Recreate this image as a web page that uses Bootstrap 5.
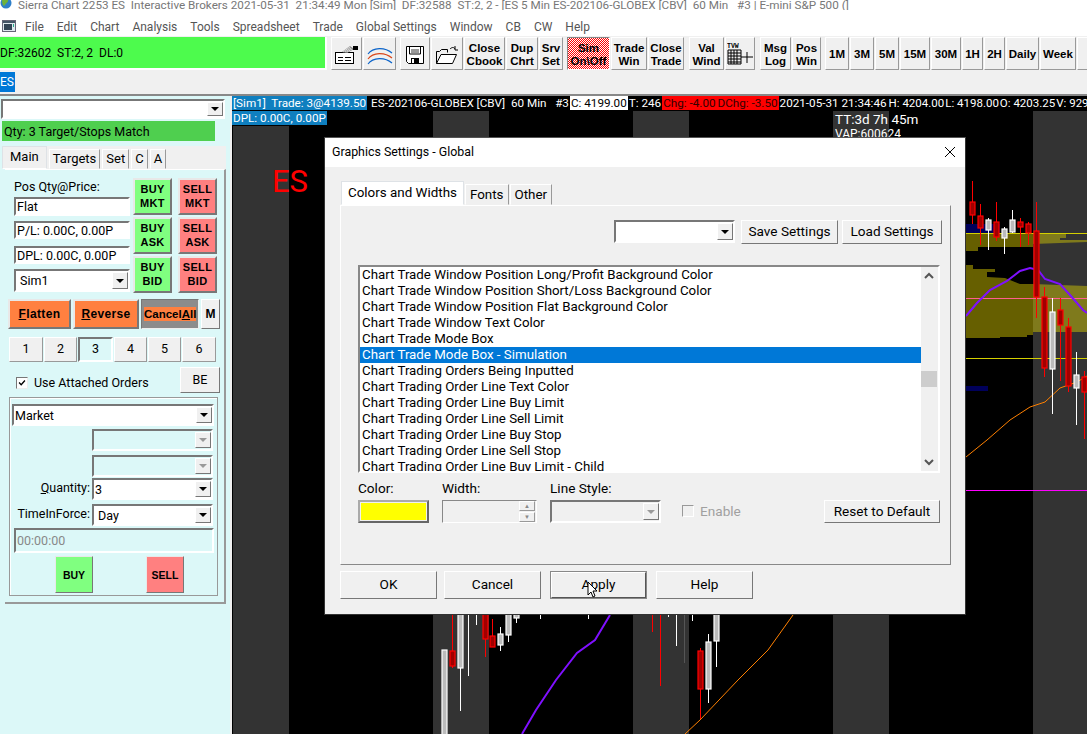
<!doctype html>
<html lang="en">
<head>
<meta charset="utf-8">
<title>Sierra Chart</title>
<link href="https://cdn.jsdelivr.net/npm/bootstrap@5.3.0/dist/css/bootstrap.min.css" rel="stylesheet">
<style>
html,body{margin:0;height:100%;overflow:hidden;background:#f0f0f0}
body{font:12px/1.2 Roboto,"Liberation Sans",Arial,sans-serif;color:#000}
.screen{position:relative;width:1087px;height:734px;overflow:hidden}
.titlebar{height:10px;background:#fff;color:#777;line-height:10px;white-space:nowrap;padding-left:18px;position:relative;font-size:11.7px}
.globe{position:absolute;left:0;top:-3px}
.menubar{height:26px;background:#fff;color:#555;padding:10px 0 0 25px;gap:13px;position:relative;line-height:14px;font-size:12px}
.mnuicon{position:absolute;left:2px;top:10px}
.toolbar{height:36px;padding-top:1px;background:#f0f0f0;gap:1px;white-space:nowrap}
.greenbox{width:327px;height:33px;background:#4dfb4d;border-bottom:2px solid #fff;border-right:2px solid #fff;line-height:33px;margin-right:3px;flex:none;font-size:12px}
.tb{height:33px;background:#f0f0f0;border:1px solid;border-color:#fff #999 #999 #fff;font:700 11.5px/13px "Liberation Sans",sans-serif;text-align:center;padding:2px 0 0;border-radius:0;color:#000;flex:none}
.tb:hover{background:#f0f0f0}
.tb svg{display:block;margin:auto}
.w31{width:31px}.w32{width:32px}.w33{width:33px}.w41{width:41px}.w30{width:30px}.w36{width:36px}.w21{width:21px}.w24{width:24px}.w34{width:34px}.w35{width:35px}.w29{width:29px}.w43{width:43px}
.lg3{margin-left:3px}.lg4{margin-left:4px}
.simbtn{background:repeating-conic-gradient(#f00 0 25%,#fff 0 50%) 0 0/2px 2px;border-color:#888 #fff #fff #888}
.simbtn:hover{background:repeating-conic-gradient(#f00 0 25%,#fff 0 50%) 0 0/2px 2px}
.tabstrip{height:24px;background:#f0f0f0;border-bottom:2px solid #888}
.estab{width:15px;height:20px;background:#0078d7;color:#fff;line-height:20px;font-size:12px}
.mainarea{height:638px}
.leftpane{width:230px;flex:none;background:#dcf8f8;padding:3px 0 0 1px;font-size:12.5px}
.sunken{background:#fff;border:2px solid;border-color:#777 #fff #fff #777;display:flex;align-items:center;overflow:hidden;white-space:nowrap;padding-left:1px}
.combo{justify-content:space-between;padding-right:0}
.cbtn{width:16px;height:calc(100% - 2px);background:#f0f0f0;border:1px solid;border-color:#fff #777 #777 #fff;display:flex;align-items:center;justify-content:center;flex:none;margin-bottom:0}
.cbtn::after{content:"";border:4px solid transparent;border-top:4px solid #000;border-bottom:0}
.dis .cbtn::after{border-top-color:#999}
.dis{background:#dcf8f8}
.topcombo{width:224px;height:20px}
.qtybar{width:213px;height:20px;margin:2px 0 0 1px;background:#4fcf4f;line-height:22px;padding-left:2px;white-space:nowrap;font-size:12.5px}
.ltabs{margin:5px 0 0 1px;width:224px;height:23px;background:#f0f0f0;border:0;padding-left:0;gap:2px;align-items:flex-end}
.ltabs .nav-link,.dtabs .nav-link{padding:0 3px;color:#000;background:#f0f0f0;border:1px solid;border-color:#fff #999 #f0f0f0 #fff;border-radius:0;height:20px;line-height:18px;margin:0;font-size:13px}
.ltabs .nav-link.active,.dtabs .nav-link.active{height:23px;line-height:19px}
.ltabs .nav-link.active{background:#f0f0f0;padding:0 7px}
.lbody{margin-left:4px;width:221px;height:435px;background:#dcf8f8;border:solid #999;border-width:0 2px 2px 0;padding-top:8px;border-top:1px solid #fff;outline:0}
.fields{width:116px;margin-left:9px;margin-right:3px}
.lbl{height:19px;line-height:18px;white-space:nowrap}
.f19{height:19px;line-height:15px}.f18{height:18px}
.mt6x{margin-top:5px}.mt7x{margin-top:7px}.mt5x{margin-top:5px}
.f23{height:23px}
.tcol{width:39px;gap:2px;margin-right:6px}
.tr{height:37px;border:2px solid;border-color:#e8e8e8 #777 #777 #e8e8e8;border-radius:0;padding:0 0 2px;font:700 11px/14px "Liberation Sans",sans-serif;color:#000;letter-spacing:.03em}
.tgreen,.tgreen:hover{background:#80ff80}
.tred,.tred:hover{background:#ff8080}
.actrow{margin:6px 0 0 3px;gap:2px;height:30px}
.orb,.orb:hover{background:#ff8040;border:2px solid;border-color:#e8e8e8 #777 #777 #e8e8e8;border-radius:0;font:700 12px "Liberation Sans",sans-serif;padding:0;color:#000;letter-spacing:.03em}
.o63{width:63px}.o66{width:66px}
.cancelb,.cancelb:hover{width:58px;background:#8c8c8c;border:1px solid;border-color:#777 #eee #eee #777;padding:0 2px;border-radius:0;display:flex;align-items:center}
.cancelb span{background:#ff8040;display:block;width:100%;font:700 11.5px/14px "Liberation Sans",sans-serif;white-space:nowrap;color:#000}
.mb1x,.mb1x:hover{width:19px;background:#f0f0f0;border:1px solid;border-color:#fff #777 #777 #fff;font:700 12px "Liberation Sans",sans-serif;padding:0;border-radius:0;color:#000}
.numrow{margin:8px 0 0 4px;gap:1px;height:25px}
.nb,.nb:hover{height:25px;background:#f0f0f0;border:1px solid;border-color:#fff #999 #999 #fff;padding:0;border-radius:0;font-size:12.5px;color:#000}
.nb.active,.nb.active:hover{background:#dcf8f8;border-color:#777 #fff #fff #777;border-width:2px}
.n33{width:33px}.n34{width:34px}.n35{width:35px}
.attrow{margin:5px 0 0 11px;height:26px;width:204px}
.ck{width:12px;height:12px;background:#fff;border:1px solid;border-color:#777 #eee #eee #777;flex:none;display:block}
.attlbl{margin-left:6px;white-space:nowrap;flex:1;padding-top:6px;line-height:20px}
.attwrap{padding-top:10px}
.beb,.beb:hover{width:40px;height:26px;background:#f0f0f0;border:1px solid;border-color:#fff #777 #777 #fff;padding:0;border-radius:0;font-size:12.5px;color:#000}
.grpbox{margin:4px 0 0 4px;width:209px;height:199px;border:1px solid #999;box-shadow:inset 1px 1px 0 #fff;padding:6px 3px 0 2px}
.c202{height:22px}
.crow{height:22px;margin-top:3px}
.crow.gap4{margin-top:4px}
.crow.tight{margin-top:1px}
.crow.tight2{margin-top:4px}
.clabel{width:80px;text-align:right;padding-right:2px;white-space:nowrap;flex:none;line-height:20px}
.ctrlw{width:121px;height:22px}
.timefld{height:25px;margin:2px 0 0 2px;width:200px;color:#888;background:#dcf8f8}
.buysell{margin:3px 0 0 0;padding:0 30px 0 43px;justify-content:space-between}
.bsb{width:38px;height:37px;padding:0;border:1px solid;border-color:#e8e8e8 #777 #777 #e8e8e8;border-radius:0;font:700 10.5px "Liberation Sans",sans-serif;color:#000}
.chartpane{position:relative;flex:1;background:#000;border-left:2px solid #f0f0f0;overflow:hidden;color:#fff}
.chartsvg{position:absolute;left:0;top:0;width:855px;height:638px}
.hd{position:relative;height:15px;line-height:15px;white-space:nowrap;font-size:11.7px}
.hb{background:#0f7fbf}
.hw{background:#fff;color:#000}
.hr{background:#f00;color:#300}
.hd span{padding:0 1px}
.hd .hn{padding:0;margin-left:1px;font-size:11.5px}
.hd .m3{margin-left:3px}
.eslbl{position:absolute;left:40px;top:67px;font-size:31px;line-height:38px;color:#f00}
.ttlbl{position:absolute;left:603px;top:14px;font-size:13.5px;line-height:18px}
.vaplbl{position:absolute;left:603px;top:31px;font-size:12px;line-height:14px;height:10px;overflow:hidden}
.dlg{position:absolute;left:324px;top:137px;width:642px;height:478px;background:#f0f0f0;border:1px solid #333;border-top-color:#555;z-index:5}
.dtitle{height:29px;background:#fff;line-height:27px;padding:0 9px 2px 7px;font-size:12.4px}
.dtabs{margin:14px 0 0 16px;border:0;align-items:flex-end;height:24px;gap:1px}
.dtabs .nav-link{height:21px;line-height:19px;font-size:13.4px;padding:0 4px}
.dtabs .nav-link.active{height:24px;line-height:21px;padding:0 6px}
.dpane{margin-left:15px;width:611px;height:360px;border:1px solid;border-color:#fff #888 #888 #fff;padding-top:14px;background:#f0f0f0}
.dtop{justify-content:flex-end;padding-right:8px;gap:4px;height:24px}
.wb,.wb:hover{background:#f0f0f0;border:1px solid;border-color:#fff #777 #777 #fff;padding:0 0 2px;border-radius:0;font-size:13.6px;color:#000;white-space:nowrap}
.scombo{width:121px;height:23px;margin-right:2px;font-size:12px}
.b97{width:97px}.b100{width:100px}
.lbox{margin:21px 0 0 17px;width:582px;height:208px;border:2px solid;border-color:#888 #fff #fff #888;background:#fff;overflow:hidden;padding-bottom:0}
.lbox .list-group{flex:1;border-radius:0;overflow:hidden}
.lbox .list-group-item{flex:none;border:0;padding:0 0 0 2px;height:16px;line-height:15px;font-size:13.3px;color:#000;white-space:nowrap;border-radius:0;background:transparent}
.lbox .list-group-item.active{background:#0078d7;color:#fff;margin:0}
.sbar{width:17px;background:#f0f0f0;position:relative;flex:none;margin-right:0}
.sthumb{position:absolute;left:0;top:104px;width:16px;height:16px;background:#cdcdcd}
.sup{position:absolute;left:3px;top:5px}
.sdn{position:absolute;left:3px;top:192px}
.dopts{margin:8px 0 0 17px;width:583px;color:#000}
.optlbl{line-height:15px;height:15px;margin-bottom:4px;font-size:13.6px;white-space:nowrap}
.swatch{width:71px;height:23px;border:2px solid;border-color:#aaa #666 #666 #aaa;padding:1px;background:#f0f0f0}
.swatch i{display:block;height:100%;background:#ff0}
.col84{width:84px}.col108{width:108px}.col132{width:132px}
.spin{width:95px;height:23px;background:#f0f0f0;border:1px solid;border-color:#888 #fff #fff #888;position:relative}
.spbtn{position:absolute;right:1px;width:16px;height:10px;border:1px solid;border-color:#fff #999 #999 #fff;font-size:6px;line-height:8px;text-align:center;color:#888}
.spu{top:0}.spd{bottom:0}
.lscombo{width:111px;height:23px;background:#f0f0f0}
.encol{color:#a0a0a0;font-size:13.6px;width:142px;flex:none;line-height:16px;padding-top:22px}
.enck{width:12px;height:12px;border:1px solid;border-color:#999 #fff #fff #999;margin:2px 6px 0 0;flex:none}
.reset{width:116px;height:23px;margin-top:19px;flex:none}
.dbtns{margin:6px 0 0 15px;height:28px}
.db{width:97px;height:28px}
.db8{margin-left:7px}.db9{margin-left:9px}
.apply,.apply:hover{border:2px solid;border-color:#fff #555 #555 #fff;outline:1px solid #888;outline-offset:-1px}
.cursorx{position:absolute;left:262px;top:443px;z-index:2}
</style>
</head>
<body>
<div class="screen d-flex flex-column">
  <div class="titlebar">
    <svg class="globe" width="12" height="13" viewBox="0 0 12 13"><circle cx="6" cy="6" r="5.5" fill="#2f7fc8"/><path d="M2 3c2-2 5-2 6 0s-2 3-3 5-3 0-3-5z" fill="#6fb23a"/></svg>
    Sierra Chart 2253 ES&nbsp; Interactive Brokers 2021-05-31&nbsp; 21:34:49 Mon [Sim]&nbsp; DF:32588&nbsp; ST:2, 2 - [ES 5 Min ES-202106-GLOBEX [CBV]&nbsp; 60 Min&nbsp; &nbsp;#3 | E-mini S&amp;P 500 (]
  </div>
  <div class="menubar d-flex">
    <svg class="mnuicon" width="14" height="13" viewBox="0 0 14 13"><rect x=".5" y=".5" width="13" height="11" fill="#dfe8ee" stroke="#667"/><rect x="1" y="1" width="12" height="2" fill="#456"/><rect x="2" y="4" width="8" height="6" fill="#345"/><rect x="11" y="4" width="1" height="3" fill="#2a8"/></svg>
    <span>File</span><span>Edit</span><span>Chart</span><span>Analysis</span><span>Tools</span><span>Spreadsheet</span><span>Trade</span><span>Global Settings</span><span>Window</span><span>CB</span><span>CW</span><span>Help</span>
  </div>
  <div class="toolbar d-flex">
    <div class="greenbox">DF:32602&nbsp; ST:2, 2&nbsp; DL:0</div>
    <button class="btn tb w31" aria-label="Settings"><svg width="26" height="22" viewBox="0 0 26 22"><rect x="1.5" y="8.5" width="18" height="11" fill="#fff" stroke="#000"/><path d="M4 13.5h5M11 13.5h6M4 16.5h5M11 16.5h6" stroke="#000"/><path d="M8 8l8-6 4 3-7 4z" fill="#888"/><path d="M9 8l7-5M11 8l6-4M13 8l5-3" stroke="#fff" stroke-width=".7"/><rect x="19" y="2" width="5" height="4" fill="#000"/></svg></button>
    <button class="btn tb w33" aria-label="Studies"><svg width="26" height="22" viewBox="0 0 26 22" fill="none" stroke-width="1.1"><path d="M1 10C6 3 18 3 25 9" stroke="#0a63c9"/><path d="M1 15C6 8 18 8 25 14" stroke="#d8461a"/><path d="M1 20C6 13 18 13 25 19" stroke="#0a63c9"/></svg></button>
    <button class="btn tb w30 lg3" aria-label="Save"><svg width="20" height="20" viewBox="0 0 20 20"><path d="M1.5 1.5h17v17h-15l-2-2z" fill="#fff" stroke="#000"/><path d="M4.5 2v7h11V2" fill="none" stroke="#000"/><path d="M6 5h8M6 7h8" stroke="#000" stroke-width=".8"/><rect x="6" y="13" width="8" height="6" fill="#000"/><rect x="7" y="14" width="2" height="4" fill="#fff"/></svg></button>
    <button class="btn tb w32" aria-label="Open"><svg width="24" height="20" viewBox="0 0 24 20" fill="none" stroke="#000"><path d="M1.5 18.5V6.500h3l2-2h6v3"/><path d="M1.500 18.500h16l4-9H6l-4.500 9z" fill="#fff"/><path d="M15 4c2-2 4-2 5 0M20 1v4h3" stroke-width="1"/></svg></button>
    <button class="btn tb w41">Close<br>Cbook</button>
    <button class="btn tb w32">Dup<br>Chrt</button>
    <button class="btn tb w24">Srv<br>Set</button>
    <button class="btn tb simbtn w43 lg3">Sim<br>On\Off</button>
    <button class="btn tb w36">Trade<br>Win</button>
    <button class="btn tb w36">Close<br>Trade</button>
    <button class="btn tb w35 lg4">Val<br>Wind</button>
    <button class="btn tb w30" aria-label="TVW"><svg width="26" height="26" viewBox="0 0 26 26"><text x="0" y="6" font-size="6.500" font-weight="700" font-family="Liberation Mono">TVW</text><path d="M1 8h13v14H1zM1 11h13M1 14h13M1 17h13M1 20h13M4 8v14M7 8v14M10 8v14" fill="none" stroke="#000"/><path d="M14 15h12M20 10v11" stroke="#000" fill="none"/></svg></button>
    <button class="btn tb w31 lg4">Msg<br>Log</button>
    <button class="btn tb w29">Pos<br>Win</button>
    <button class="btn tb w24 lg3">1M</button>
    <button class="btn tb w24">3M</button>
    <button class="btn tb w24">5M</button>
    <button class="btn tb w30">15M</button>
    <button class="btn tb w30">30M</button>
    <button class="btn tb w21">1H</button>
    <button class="btn tb w21">2H</button>
    <button class="btn tb w33">Daily</button>
    <button class="btn tb w36">Week</button>
    <button class="btn tb w30">1</button>
  </div>
  <div class="tabstrip"><div class="estab">ES</div></div>
  <div class="mainarea d-flex">
    <div class="leftpane">
      <div class="sunken combo topcombo"><span></span><span class="cbtn"></span></div>
      <div class="qtybar">Qty: 3 Target/Stops Match</div>
      <ul class="nav nav-tabs ltabs">
        <li class="nav-item"><a class="nav-link active" href="#">Main</a></li>
        <li class="nav-item"><a class="nav-link" href="#">Targets</a></li>
        <li class="nav-item"><a class="nav-link" href="#">Set</a></li>
        <li class="nav-item"><a class="nav-link" href="#">C</a></li>
        <li class="nav-item"><a class="nav-link" href="#">A</a></li>
      </ul>
      <div class="lbody">
        <div class="d-flex">
          <div class="fields">
            <div class="lbl">Pos Qty@Price:</div>
            <div class="sunken f19">Flat</div>
            <div class="sunken f18 mt6x">P/L: 0.00C, 0.00P</div>
            <div class="sunken f18 mt7x">DPL: 0.00C, 0.00P</div>
            <div class="sunken combo f23 mt5x"><span>&nbsp;Sim1</span><span class="cbtn"></span></div>
          </div>
          <div class="d-flex flex-column tcol">
            <button class="btn tr tgreen">BUY<br>MKT</button>
            <button class="btn tr tgreen">BUY<br>ASK</button>
            <button class="btn tr tgreen">BUY<br>BID</button>
          </div>
          <div class="d-flex flex-column tcol">
            <button class="btn tr tred">SELL<br>MKT</button>
            <button class="btn tr tred">SELL<br>ASK</button>
            <button class="btn tr tred">SELL<br>BID</button>
          </div>
        </div>
        <div class="d-flex actrow">
          <button class="btn orb o63"><u>F</u>latten</button>
          <button class="btn orb o66"><u>R</u>everse</button>
          <button class="btn cancelb"><span>Cancel<u>A</u>ll</span></button>
          <button class="btn mb1x">M</button>
        </div>
        <div class="d-flex numrow">
          <button class="btn nb n34">1</button>
          <button class="btn nb n33">2</button>
          <button class="btn nb n35 active">3</button>
          <button class="btn nb n33">4</button>
          <button class="btn nb n33">5</button>
          <button class="btn nb n34">6</button>
        </div>
        <div class="d-flex attrow">
          <div class="attwrap"><svg class="ck" viewBox="0 0 12 12"><path d="M2.500 5.500l2.500 2.500 4.500-5" fill="none" stroke="#000" stroke-width="1.600"/></svg></div>
          <div class="attlbl">Use Attached Orders</div>
          <button class="btn beb">BE</button>
        </div>
        <div class="grpbox">
          <div class="sunken combo c202"><span>Market</span><span class="cbtn"></span></div>
          <div class="d-flex crow"><div class="clabel"></div><div class="sunken combo dis ctrlw"><span></span><span class="cbtn"></span></div></div>
          <div class="d-flex crow gap4"><div class="clabel"></div><div class="sunken combo dis ctrlw"><span></span><span class="cbtn"></span></div></div>
          <div class="d-flex crow tight"><div class="clabel"><u>Q</u>uantity:</div><div class="sunken combo ctrlw"><span>3</span><span class="cbtn"></span></div></div>
          <div class="d-flex crow tight2"><div class="clabel">TimeInForce:</div><div class="sunken combo ctrlw"><span>&nbsp;Day</span><span class="cbtn"></span></div></div>
          <div class="sunken timefld">00:00:00</div>
          <div class="d-flex buysell">
            <button class="btn bsb tgreen">BUY</button>
            <button class="btn bsb tred">SELL</button>
          </div>
        </div>
      </div>
    </div>
    <div class="chartpane">
      <svg class="chartsvg" viewBox="232 96 855 638" aria-hidden="true">
        <g fill="#333"><rect x="233" y="126" width="56" height="608"/><rect x="433" y="111" width="56" height="623"/><rect x="633" y="111" width="56" height="623"/><rect x="833" y="111" width="56" height="623"/><rect x="1033" y="111" width="54" height="623"/></g>
        <rect x="966" y="224" width="34" height="9" fill="#00005a"/>
        <rect x="966" y="386" width="22" height="5" fill="#00005a"/>
        <polygon points="966,233 1033,233 1033,247 978,247 978,251 966,251" fill="#665f00"/>
        <polygon points="1033,234 1066,234 1066,238 1060,238 1060,240 1087,240 1087,242 1033,244" fill="#7f7a1c"/>
        <polygon points="966,265 973,265 973,269 995,269 995,272 987,272 987,277 1005,278 1020,284 1033,284 1033,332 1033,335 1027,335 1027,337 1000,337 1000,338 966,338" fill="#665f00"/>
        <polygon points="1033,284 1087,286 1087,332 1033,332" fill="#7f7a1c"/>
        <g stroke-width="1.200"><path d="M966 233.500H1087M966 358.500H1087" stroke="#d4d000"/><path d="M966 298.500H1087" stroke="#ff5f8f"/><path d="M966 490.500H1087" stroke="#f0f"/></g>
        <polyline points="966,316 977,303 990,290 1007,281 1020,271 1030,268 1038,270 1045,279 1060,284 1070,295 1083,310 1087,313" fill="none" stroke="#7f10ff" stroke-width="2"/>
        <polyline points="966,457 987,440 1010,420 1030,407 1045,402 1060,388 1077,382 1087,376" fill="none" stroke="#ff8000"/>
        <g fill="none" stroke="#f00">
          <path d="M972.500 181V224M980.500 204V245M996.500 202V241M1020.500 218V247M1028.500 222V245M1036.500 202V318M1044.500 287V377M1060.500 298V381M1068.500 318V392M1084.500 371V439"/>
          <path d="M452.500 615V668M485.500 615V657M492.500 619V636M652.500 615V632M660.500 615V686M700.500 648V720"/>
        </g>
        <g fill="none" stroke="#fff">
          <path d="M988.500 218V250M1004.500 227V254M1012.500 210V233M1052.500 298V414M1076.500 352V425"/>
          <path d="M460.500 615V711M468.500 615V676M476.500 615V625M500.500 627V651M508.500 615V642M516.500 615V623M540.500 615V619M588.500 615V619M668.500 615V617M676.500 615V646M692.500 615V621M708.500 634V703M716.500 615V667"/>
        </g>
        <path d="M684.500 615V663" stroke="#555"/>
        <g fill="#a00000" stroke="#f00" stroke-width="1.200">
          <rect x="970" y="202" width="5" height="13"/><rect x="978" y="216" width="5" height="12"/><rect x="994" y="222" width="5" height="15"/><rect x="1018" y="222" width="5" height="5"/><rect x="1026" y="224" width="5" height="9"/><rect x="1034" y="231" width="5" height="66"/><rect x="1042" y="297" width="5" height="71"/><rect x="1058" y="310" width="5" height="15"/><rect x="1066" y="327" width="5" height="59"/><rect x="1082" y="377" width="5" height="15"/>
          <rect x="450" y="651" width="5" height="15"/><rect x="483" y="610" width="5" height="29"/><rect x="490" y="636" width="5" height="11"/><rect x="698" y="651" width="5" height="38"/>
        </g>
        <g fill="#bbb" stroke="#fff" stroke-width="1.200">
          <rect x="986" y="220" width="5" height="10"/><rect x="1002" y="229" width="5" height="9"/><rect x="1010" y="220" width="5" height="12"/><rect x="1050" y="312" width="5" height="57"/><rect x="1074" y="375" width="5" height="13"/>
          <rect x="442" y="650" width="5" height="90"/><rect x="458" y="610" width="5" height="58"/><rect x="498" y="634" width="5" height="11"/><rect x="506" y="610" width="5" height="25"/><rect x="514" y="610" width="5" height="8"/><rect x="706" y="642" width="5" height="47"/><rect x="714" y="610" width="5" height="31"/>
        </g>
        <polyline points="610,615 595,640 577,653 556,680 536,710 522,734" fill="none" stroke="#7f10ff" stroke-width="2"/>
        <polyline points="793,615 768,650 738,680 700,720 685,734" fill="none" stroke="#ff8000"/>
      </svg>
      <div class="hd"><span class="hb">[Sim1]&nbsp; Trade: 3@4139.50</span><span class="m3">ES-202106-GLOBEX [CBV]&nbsp; 60 Min&nbsp; &nbsp;#3</span><span class="hw">C: 4199.00</span><span>T: 246</span><span class="hr">Chg: -4.00</span><span class="hr">DChg: -3.50</span><span>2021-05-31 21:34:46</span><span class="hn">H: 4204.00</span><span class="hn">L: 4198.00</span><span class="hn">O: 4203.25</span><span class="hn">V: 929</span></div>
      <div class="hd"><span class="hb">DPL: 0.00C, 0.00P</span></div>
      <div class="eslbl">ES</div>
      <div class="ttlbl">TT:3d 7h 45m</div>
      <div class="vaplbl">VAP:600624</div>
    </div>
  </div>
  <div class="dlg">
    <div class="dtitle d-flex justify-content-between align-items-center">
      <span>Graphics Settings - Global</span>
      <svg width="12" height="12" viewBox="0 0 12 12"><path d="M1 1l10 10M11 1L1 11" stroke="#000" fill="none"/></svg>
    </div>
    <ul class="nav nav-tabs dtabs">
      <li class="nav-item"><a class="nav-link active" href="#">Colors and Widths</a></li>
      <li class="nav-item"><a class="nav-link" href="#">Fonts</a></li>
      <li class="nav-item"><a class="nav-link" href="#">Other</a></li>
    </ul>
    <div class="dpane">
      <div class="d-flex dtop">
        <div class="sunken combo scombo"><span></span><span class="cbtn"></span></div>
        <button class="btn wb b97">Save Settings</button>
        <button class="btn wb b100">Load Settings</button>
      </div>
      <div class="lbox d-flex">
        <div class="list-group">
          <div class="list-group-item">Chart Trade Window Position Long/Profit Background Color</div>
          <div class="list-group-item">Chart Trade Window Position Short/Loss Background Color</div>
          <div class="list-group-item">Chart Trade Window Position Flat Background Color</div>
          <div class="list-group-item">Chart Trade Window Text Color</div>
          <div class="list-group-item">Chart Trade Mode Box</div>
          <div class="list-group-item active">Chart Trade Mode Box - Simulation</div>
          <div class="list-group-item">Chart Trading Orders Being Inputted</div>
          <div class="list-group-item">Chart Trading Order Line Text Color</div>
          <div class="list-group-item">Chart Trading Order Line Buy Limit</div>
          <div class="list-group-item">Chart Trading Order Line Sell Limit</div>
          <div class="list-group-item">Chart Trading Order Line Buy Stop</div>
          <div class="list-group-item">Chart Trading Order Line Sell Stop</div>
          <div class="list-group-item">Chart Trading Order Line Buy Limit - Child</div>
        </div>
        <div class="sbar">
          <svg class="sup" width="10" height="7" viewBox="0 0 10 7"><path d="M1 6l4-4 4 4" fill="none" stroke="#555" stroke-width="2"/></svg>
          <div class="sthumb"></div>
          <svg class="sdn" width="10" height="7" viewBox="0 0 10 7"><path d="M1 1l4 4 4-4" fill="none" stroke="#555" stroke-width="2"/></svg>
        </div>
      </div>
      <div class="d-flex dopts">
        <div class="col84"><div class="optlbl">Color:</div><div class="swatch"><i></i></div></div>
        <div class="col108"><div class="optlbl">Width:</div><div class="spin"><span class="spbtn spu">▲</span><span class="spbtn spd">▼</span></div></div>
        <div class="col132"><div class="optlbl">Line Style:</div><div class="sunken combo dis lscombo"><span></span><span class="cbtn"></span></div></div>
        <div class="d-flex encol"><span class="enck"></span><span>Enable</span></div>
        <button class="btn wb reset">Reset to Default</button>
      </div>
    </div>
    <div class="d-flex dbtns">
      <button class="btn wb db">OK</button>
      <button class="btn wb db db8">Cancel</button>
      <button class="btn wb db db9 apply">Apply</button>
      <button class="btn wb db db9">Help</button>
    </div>
    <svg class="cursorx" width="12" height="18" viewBox="0 0 12 18"><path d="M1 1v13l3-3 2 5 2-1-2-5h4z" fill="#fff" stroke="#000"/></svg>
  </div>
</div>
<script src="https://cdn.jsdelivr.net/npm/bootstrap@5.3.0/dist/js/bootstrap.bundle.min.js"></script>
</body>
</html>
